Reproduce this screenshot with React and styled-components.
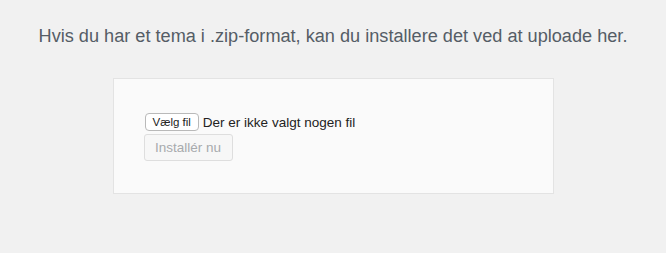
import React from 'react'
import styled, { createGlobalStyle } from 'styled-components'

const Global = createGlobalStyle`
  html, body {
    margin: 0;
    background: #f1f1f1;
    font-family: "Liberation Sans", Arial, sans-serif;
  }
`

const Page = styled.div`
  width: 666px;
  height: 253px;
  display: flex;
  flex-direction: column;
  align-items: center;
  padding-top: 24px;
  box-sizing: border-box;
`

const Intro = styled.p`
  margin: 0;
  font-size: 18.15px;
  line-height: 24px;
  color: #555d66;
`

const UploadBox = styled.form`
  margin-top: 30px;
  width: 441px;
  height: 116px;
  box-sizing: border-box;
  background: #fafafa;
  border: 1px solid #e3e3e3;
  padding: 34px 30px 0;
  display: flex;
  flex-direction: column;
  gap: 3px;
`

const FileRow = styled.div`
  display: flex;
  align-items: center;
  gap: 4px;
`

const FileButton = styled.span`
  display: inline-flex;
  align-items: center;
  height: 16px;
  padding: 0 7px;
  margin-left: 1px;
  background: #fff;
  border: 1px solid #b9b9b9;
  border-radius: 4px;
  font-size: 11.5px;
  color: #222;
`

const FileLabel = styled.span`
  font-size: 13.5px;
  color: #222;
`

const InstallButton = styled.button`
  width: 89px;
  height: 27px;
  background: #f7f7f7;
  border: 1px solid #dedede;
  border-radius: 3px;
  font-family: inherit;
  font-size: 13.5px;
  color: #a7aaad;
  padding: 0;
`

export default function App() {
  return (
    <>
      <Global />
      <Page>
        <Intro>Hvis du har et tema i .zip-format, kan du installere det ved at uploade her.</Intro>
        <UploadBox>
          <FileRow>
            <FileButton>Vælg fil</FileButton>
            <FileLabel>Der er ikke valgt nogen fil</FileLabel>
          </FileRow>
          <InstallButton disabled>Installér nu</InstallButton>
        </UploadBox>
      </Page>
    </>
  )
}
